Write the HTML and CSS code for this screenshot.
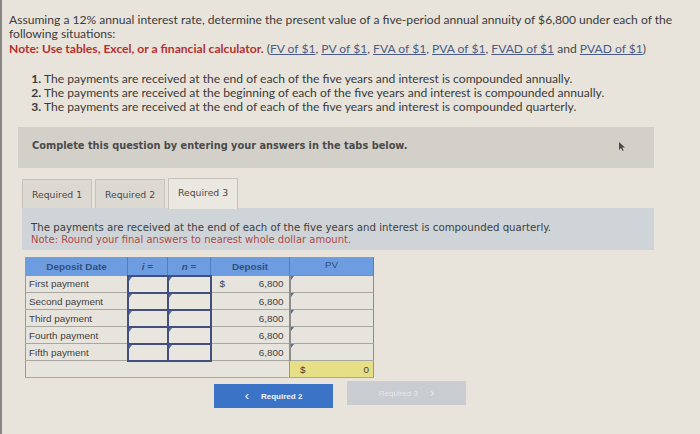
FILE: index.html
```html
<!DOCTYPE html>
<html>
<head>
<meta charset="utf-8">
<link rel="stylesheet" href="styles.css">
</head>
<body>
<div class="page">
  <p class="intro">Assuming a 12% annual interest rate, determine the present value of a five-period annual annuity of $6,800 under each of the following situations:</p>
  <p class="note"><b>Note: Use tables, Excel, or a financial calculator.</b> <span class="links">(<a>FV of $1</a>, <a>PV of $1</a>, <a>FVA of $1</a>, <a>PVA of $1</a>, <a>FVAD of $1</a> and <a>PVAD of $1</a>)</span></p>
  <ol class="items">
    <li>The payments are received at the end of each of the five years and interest is compounded annually.</li>
    <li>The payments are received at the beginning of each of the five years and interest is compounded annually.</li>
    <li>The payments are received at the end of each of the five years and interest is compounded quarterly.</li>
  </ol>
  <div class="complete">Complete this question by entering your answers in the tabs below.<svg class="cursor" width="8" height="11" viewBox="0 0 8 11"><path d="M1 1 L1 9 L3 7 L4.5 10 L5.7 9.4 L4.3 6.5 L7 6.5 Z" fill="#4a4a4a"/></svg></div>
  <div class="tabs">
    <div class="tab">Required 1</div>
    <div class="tab">Required 2</div>
    <div class="tab active">Required 3</div>
  </div>
  <div class="panel">
    <div>The payments are received at the end of each of the five years and interest is compounded quarterly.</div>
    <div class="round">Note: Round your final answers to nearest whole dollar amount.</div>
  </div>
  <div class="work">
    <table class="grid">
      <tr class="head">
        <th class="c1">Deposit Date</th>
        <th class="c2"><i>i</i> =</th>
        <th class="c3"><i>n</i> =</th>
        <th class="c4">Deposit</th>
        <th class="c5">PV</th>
      </tr>
      <tr><td class="label">First payment</td><td class="inp"></td><td class="inp"></td><td class="dep"><span>$</span><span>6,800</span></td><td class="pv"></td></tr>
      <tr><td class="label">Second payment</td><td class="inp"></td><td class="inp"></td><td class="dep"><span></span><span>6,800</span></td><td class="pv"></td></tr>
      <tr><td class="label">Third payment</td><td class="inp"></td><td class="inp"></td><td class="dep"><span></span><span>6,800</span></td><td class="pv"></td></tr>
      <tr><td class="label">Fourth payment</td><td class="inp"></td><td class="inp"></td><td class="dep"><span></span><span>6,800</span></td><td class="pv"></td></tr>
      <tr><td class="label">Fifth payment</td><td class="inp"></td><td class="inp"></td><td class="dep"><span></span><span>6,800</span></td><td class="pv"></td></tr>
      <tr class="total"><td colspan="4" class="blank"></td><td class="sum"><span>$</span><span>0</span></td></tr>
    </table>
    <div class="nav">
      <div class="btn prev"><span class="chev">&lsaquo;</span> Required 2</div>
      <div class="btn next">Required 3 <span class="chev">&rsaquo;</span></div>
    </div>
  </div>
</div>
</body>
</html>
```

FILE: styles.css
```css
html, body {
  margin: 0;
  padding: 0;
}
body {
  width: 700px;
  height: 434px;
  overflow: hidden;
  background: #e8e4dc;
  border-left: 2px solid #8a8884;
  box-sizing: border-box;
  font-family: "Lato", "Liberation Sans", sans-serif;
  color: #3a3a3a;
}
.page {
  padding: 13px 0 0 7px;
}
.intro {
  margin: 0;
  font-size: 12.1px;
  line-height: 14px;
  width: 690px;
}
.note {
  margin: 0;
  font-size: 12.1px;
  line-height: 16px;
  white-space: nowrap;
}
.note b {
  color: #b2312f;
  font-weight: 700;
}
.links {
  color: #444;
}
.links a {
  color: #4b5b86;
  text-decoration: underline;
}
.items {
  margin: 15px 0 0 0;
  padding-left: 35px;
  font-size: 12.1px;
  line-height: 14px;
}
.items li::marker {
  font-weight: 700;
}
.complete {
  margin: 13px 0 0 9px;
  width: 636px;
  height: 41px;
  box-sizing: border-box;
  padding: 13px 0 0 14px;
  background: #d3d0c9;
  font-family: "DejaVu Sans", Verdana, sans-serif;
  font-size: 9.8px;
  font-weight: 700;
  color: #4a4a4a;
  position: relative;
}
.cursor {
  position: absolute;
  left: 600px;
  top: 14px;
}
.tabs {
  display: flex;
  margin: 10px 0 0 13px;
  gap: 3px;
  align-items: flex-end;
  height: 30px;
}
.tab {
  width: 70px;
  height: 29px;
  box-sizing: border-box;
  border: 1px solid #c6c3bc;
  border-bottom: none;
  background: #dcd9d2;
  font-family: "DejaVu Sans", Verdana, sans-serif;
  font-size: 9.3px;
  color: #4a4a4a;
  display: flex;
  align-items: center;
  justify-content: center;
}
.tab.active {
  height: 31px;
  background: #ebe8e1;
  margin-bottom: -1px;
  position: relative;
  padding-bottom: 3px;
}
.panel {
  margin-left: 13px;
  width: 632px;
  height: 42px;
  box-sizing: border-box;
  background: #cfd4d8;
  padding: 14px 0 0 9px;
  font-family: "DejaVu Sans", Verdana, sans-serif;
  font-size: 10.2px;
  line-height: 12px;
  color: #3d3d3d;
}
.round {
  color: #b04a45;
  font-size: 10px;
}
.work {
  margin-left: 13px;
  width: 632px;
  padding-top: 7px;
}
.grid {
  border-collapse: collapse;
  margin-left: 3px;
  font-family: "Liberation Sans", Arial, sans-serif;
  font-size: 9.9px;
  color: #3f3f3f;
  border: 1px solid #9a9893;
}
.grid td, .grid th {
  height: 16px;
  padding: 0;
  box-sizing: border-box;
}
.head th {
  background: #6d9de0;
  color: #32507e;
  font-weight: 700;
  height: 18px;
  border-right: 1px solid #4f7fc4;
  text-align: center;
  vertical-align: top;
  padding-top: 3px;
}
.head .c5 {
  font-weight: 400;
  padding-top: 1px;
}
.c1 { width: 102px; }
.c2 { width: 40px; }
.c3 { width: 43px; }
.c4 { width: 79px; }
.c5 { width: 84px; }
.grid tr:not(.head) td {
  border-bottom: 1px solid #a8a6a1;
  background: #e7e4dd;
  height: 17px;
}
.label {
  padding-left: 3px !important;
  border-right: 1px solid #9a9893;
  text-align: left;
}
.inp {
  border: 2px solid #41507c !important;
  background: #e9e6e0 !important;
  position: relative;
}
.inp::before, .pv::before {
  content: "";
  position: absolute;
  left: 0;
  top: 0;
  border-top: 4px solid #4a6fb6;
  border-right: 3px solid transparent;
}
.dep {
  text-align: right;
}
.dep span:first-child {
  float: left;
  padding-left: 8px;
}
.dep span:last-child {
  padding-right: 5px;
}
.pv {
  border: 1px solid #8f8d88;
  border-left: 2px solid #8f8d88;
  position: relative;
}
.total td.blank {
  border-right: 1px solid #9a9893;
  height: 17px;
}
.grid tr.total td.sum {
  background: #e7df86;
  text-align: right;
  padding-right: 4px;
}
.sum span:first-child {
  float: left;
  padding-left: 10px;
}
.nav {
  display: flex;
  justify-content: center;
  align-items: flex-start;
  gap: 14px;
  margin-top: 6px;
  padding-left: 4px;
}
.btn {
  width: 119px;
  height: 24px;
  box-sizing: border-box;
  display: flex;
  align-items: center;
  justify-content: center;
  font-family: "Liberation Sans", Arial, sans-serif;
  font-size: 8px;
  font-weight: 700;
}
.btn.prev {
  background: #3b74c6;
  color: #f0f4fb;
  gap: 12px;
}
.btn.next {
  background: #c9ccd1;
  color: #e6e8ec;
  margin-top: -3px;
  gap: 12px;
  font-weight: 400;
}
.chev {
  font-size: 13px;
  font-weight: 400;
  line-height: 1;
  margin-top: -2px;
}
```
